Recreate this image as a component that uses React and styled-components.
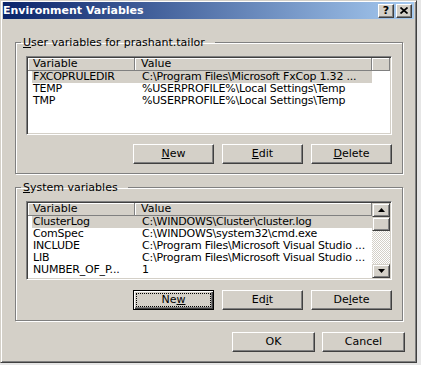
import React from "react";
import styled, { createGlobalStyle, css } from "styled-components";

const GlobalStyle = createGlobalStyle`
  html, body { margin: 0; padding: 0; background: #e6e6e6; }
  body {
    font-family: "DejaVu Sans", Tahoma, Verdana, sans-serif;
    font-size: 11px;
    color: #000;
  }
  * { box-sizing: border-box; }
`;

const Window = styled.div`
  width: 417px;
  height: 363px;
  background: #d4d0c8;
  border: 1px solid;
  border-color: #d4d0c8 #404040 #404040 #d4d0c8;
  box-shadow: inset 1px 1px #fff, inset -1px -1px #808080;
  padding: 1px 2px 2px 2px;
  display: flex;
  flex-direction: column;
`;

const TitleBar = styled.div`
  flex: none;
  height: 17px;
  display: flex;
  align-items: center;
  background: linear-gradient(to right, #0a246a, #a6caf0);
  padding: 0 2px 0 0;
`;

const Title = styled.div`
  flex: 1;
  color: #fff;
  font-weight: bold;
  font-size: 11px;
  line-height: 13px;
  white-space: nowrap;
`;

const CaptionButtons = styled.div`
  display: flex;
  gap: 2px;
`;

const CaptionButton = styled.div`
  width: 16px;
  height: 14px;
  background: #d4d0c8;
  border: 1px solid;
  border-color: #fff #404040 #404040 #fff;
  box-shadow: inset -1px -1px #808080;
  display: flex;
  align-items: center;
  justify-content: center;
  font-weight: bold;
  font-size: 11px;
  line-height: 1;
  color: #000;
`;

const Body = styled.div`
  flex: 1;
  display: flex;
  flex-direction: column;
  padding: 17px 11px 0 12px;
  gap: 7px;
`;

const Group = styled.fieldset`
  margin: 0;
  min-width: 0;
  border: 1px solid #808080;
  box-shadow: inset 1px 1px #fff, 1px 1px #fff;
  padding: 7px 10px ${(p) => (p.$roomy ? "10px" : "9px")} 10px;
  display: flex;
  flex-direction: column;
  gap: ${(p) => (p.$roomy ? "10px" : "9px")};
`;

const Legend = styled.legend`
  margin-left: -5px;
  padding: 0 10px 0 2px;
  line-height: 13px;
  font-size: 11px;
  white-space: nowrap;
`;

const ListView = styled.div`
  height: 79px;
  flex: none;
  background: #fff;
  border: 1px solid;
  border-color: #808080 #fff #fff #808080;
  box-shadow: inset 1px 1px #404040, inset -1px -1px #d4d0c8;
  padding: 1px;
  display: flex;
  overflow: hidden;
`;

const ListContent = styled.div`
  flex: 1;
  min-width: 0;
  display: flex;
  flex-direction: column;
  overflow: hidden;
`;

const HeaderRow = styled.div`
  flex: none;
  height: 13px;
  display: grid;
  grid-template-columns: 107px 237px 1fr;
`;

const HeaderCell = styled.div`
  background: #d4d0c8;
  border-right: 1px solid #808080;
  border-bottom: 1px solid #808080;
  box-shadow: inset 1px 1px #fff;
  padding-left: ${(p) => (p.$first ? "5px" : "6px")};
  line-height: 12px;
  font-size: 11px;
  white-space: nowrap;
  overflow: hidden;
`;

const Row = styled.div`
  flex: none;
  height: 12px;
  margin-left: 4px;
  width: 340px;
  display: grid;
  grid-template-columns: 103px 237px;
  background: ${(p) => (p.$selected ? "#d4d0c8" : "transparent")};
`;

const Cell = styled.div`
  padding-left: ${(p) => (p.$first ? "1px" : "7px")};
  line-height: 12px;
  font-size: 11px;
  letter-spacing: -0.2px;
  white-space: nowrap;
  overflow: hidden;
`;

const ScrollBar = styled.div`
  flex: none;
  width: 18px;
  display: flex;
  flex-direction: column;
`;

const raised = css`
  background: #d4d0c8;
  border: 1px solid;
  border-color: #d4d0c8 #404040 #404040 #d4d0c8;
  box-shadow: inset 1px 1px #fff, inset -1px -1px #808080;
`;

const ScrollArrow = styled.div`
  ${raised};
  flex: none;
  height: 14px;
  display: flex;
  align-items: center;
  justify-content: center;
`;

const ScrollThumb = styled.div`
  ${raised};
  flex: none;
  height: 14px;
`;

const ScrollTrack = styled.div`
  flex: 1;
  background-color: #fff;
  background-image: repeating-conic-gradient(#d4d0c8 0 25%, #fff 0 50%);
  background-size: 2px 2px;
`;

const ButtonRow = styled.div`
  display: flex;
  justify-content: flex-end;
  gap: 8px;
`;

const PushButton = styled.button`
  flex: none;
  width: ${(p) => p.$w || 81}px;
  height: 20px;
  padding: 0;
  margin: 0;
  font-family: inherit;
  font-size: 11px;
  color: #000;
  background: #d4d0c8;
  border: 1px solid;
  border-color: #fff #404040 #404040 #fff;
  box-shadow: inset -1px -1px #808080;
  display: flex;
  align-items: stretch;
  justify-content: stretch;
  cursor: default;
  ${(p) =>
    p.$focused &&
    css`
      border-color: #000;
      box-shadow: inset 1px 1px #fff, inset -1px -1px #404040,
        inset -2px -2px #808080;
    `}
`;

const ButtonLabel = styled.span`
  flex: 1;
  display: flex;
  align-items: center;
  justify-content: center;
  line-height: 12px;
  margin: 2px;
  border: 1px ${(p) => (p.$focused ? "dotted #000" : "solid transparent")};
`;

const Footer = styled.div`
  display: flex;
  justify-content: flex-end;
  gap: 7px;
  margin-top: 4px;
  margin-right: -2px;
`;

function Btn({ children, focused, w }) {
  return (
    <PushButton $focused={focused} $w={w}>
      <ButtonLabel $focused={focused}>{children}</ButtonLabel>
    </PushButton>
  );
}

const UpTri = () => (
  <svg width="7" height="4" viewBox="0 0 7 4">
    <path d="M3.5 0 L7 4 L0 4 Z" fill="#000" />
  </svg>
);
const DownTri = () => (
  <svg width="7" height="4" viewBox="0 0 7 4">
    <path d="M0 0 L7 0 L3.5 4 Z" fill="#000" />
  </svg>
);

function VarList({ rows, scroll }) {
  return (
    <ListView>
      <ListContent>
        <HeaderRow>
          <HeaderCell $first>Variable</HeaderCell>
          <HeaderCell>Value</HeaderCell>
          <HeaderCell />
        </HeaderRow>
        {rows.map((r, i) => (
          <Row key={i} $selected={i === 0}>
            <Cell $first>{r[0]}</Cell>
            <Cell>{r[1]}</Cell>
          </Row>
        ))}
      </ListContent>
      {scroll && (
        <ScrollBar>
          <ScrollArrow>
            <UpTri />
          </ScrollArrow>
          <ScrollThumb />
          <ScrollTrack />
          <ScrollArrow>
            <DownTri />
          </ScrollArrow>
        </ScrollBar>
      )}
    </ListView>
  );
}

const userRows = [
  ["FXCOPRULEDIR", "C:\\Program Files\\Microsoft FxCop 1.32 ..."],
  ["TEMP", "%USERPROFILE%\\Local Settings\\Temp"],
  ["TMP", "%USERPROFILE%\\Local Settings\\Temp"],
];

const sysRows = [
  ["ClusterLog", "C:\\WINDOWS\\Cluster\\cluster.log"],
  ["ComSpec", "C:\\WINDOWS\\system32\\cmd.exe"],
  ["INCLUDE", "C:\\Program Files\\Microsoft Visual Studio ..."],
  ["LIB", "C:\\Program Files\\Microsoft Visual Studio ..."],
  ["NUMBER_OF_P...", "1"],
];

export default function App() {
  return (
    <>
      <GlobalStyle />
      <Window>
        <TitleBar>
          <Title>Environment Variables</Title>
          <CaptionButtons>
            <CaptionButton>?</CaptionButton>
            <CaptionButton>
              <svg width="8" height="7" viewBox="0 0 8 7">
                <path
                  d="M0.5 0.5 L7.5 6.5 M7.5 0.5 L0.5 6.5"
                  stroke="#000"
                  strokeWidth="1.7"
                />
              </svg>
            </CaptionButton>
          </CaptionButtons>
        </TitleBar>
        <Body>
          <Group>
            <Legend>
              <u>U</u>ser variables for prashant.tailor
            </Legend>
            <VarList rows={userRows} />
            <ButtonRow>
              <Btn>
                <u>N</u>ew
              </Btn>
              <Btn>
                <u>E</u>dit
              </Btn>
              <Btn>
                <u>D</u>elete
              </Btn>
            </ButtonRow>
          </Group>
          <Group $roomy>
            <Legend>
              <u>S</u>ystem variables
            </Legend>
            <VarList rows={sysRows} scroll />
            <ButtonRow>
              <Btn focused>
                Ne<u>w</u>
              </Btn>
              <Btn>
                Ed<u>i</u>t
              </Btn>
              <Btn>
                De<u>l</u>ete
              </Btn>
            </ButtonRow>
          </Group>
          <Footer>
            <Btn w={83}>OK</Btn>
            <Btn w={83}>Cancel</Btn>
          </Footer>
        </Body>
      </Window>
    </>
  );
}
